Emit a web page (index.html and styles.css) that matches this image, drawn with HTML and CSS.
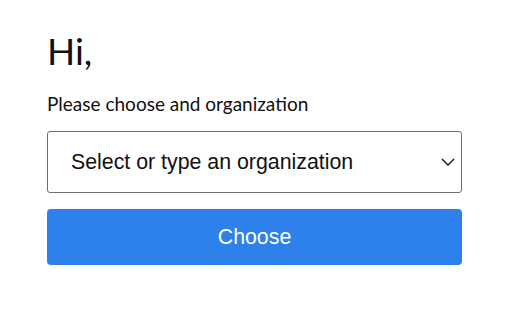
FILE: index.html
```html
<!DOCTYPE html>
<html>
<head>
<meta charset="utf-8">
<link rel="stylesheet" href="styles.css">
</head>
<body>
<main class="page">
  <h1 class="title">Hi,</h1>
  <p class="subtitle">Please choose and organization</p>
  <div class="select">
    <span class="select-text">Select or type an organization</span>
    <svg class="chevron" width="14" height="8" viewBox="0 0 14 8"><path d="M1 1 L7 7 L13 1" fill="none" stroke="#111" stroke-width="1.4"/></svg>
  </div>
  <button class="btn">Choose</button>
</main>
</body>
</html>
```
FILE: styles.css
```css
html, body { margin: 0; padding: 0; background: #fff; }
.page {
  width: 415px;
  padding: 29px 0 0 47px;
  display: flex;
  flex-direction: column;
}
.title {
  margin: 0;
  font-family: Lato, sans-serif;
  font-weight: 400;
  font-size: 37px;
  line-height: 44px;
  color: #111;
}
.subtitle {
  margin: 19px 0 0 0;
  font-family: Lato, sans-serif;
  font-size: 19px;
  line-height: 23px;
  color: #111;
}
.select {
  margin-top: 16px;
  height: 62px;
  box-sizing: border-box;
  border: 1px solid #6f6f6f;
  border-radius: 3px;
  display: flex;
  align-items: center;
  justify-content: space-between;
  padding: 0 6px 0 23px;
}
.select-text {
  font-family: "Liberation Sans", Arial, sans-serif;
  font-size: 21.33px;
  color: #111;
}
.btn {
  margin-top: 16px;
  height: 56px;
  border: none;
  border-radius: 4px;
  background: #2e81ea;
  color: #fff;
  font-family: "Liberation Sans", Arial, sans-serif;
  font-size: 21.33px;
  padding: 0;
}
```
